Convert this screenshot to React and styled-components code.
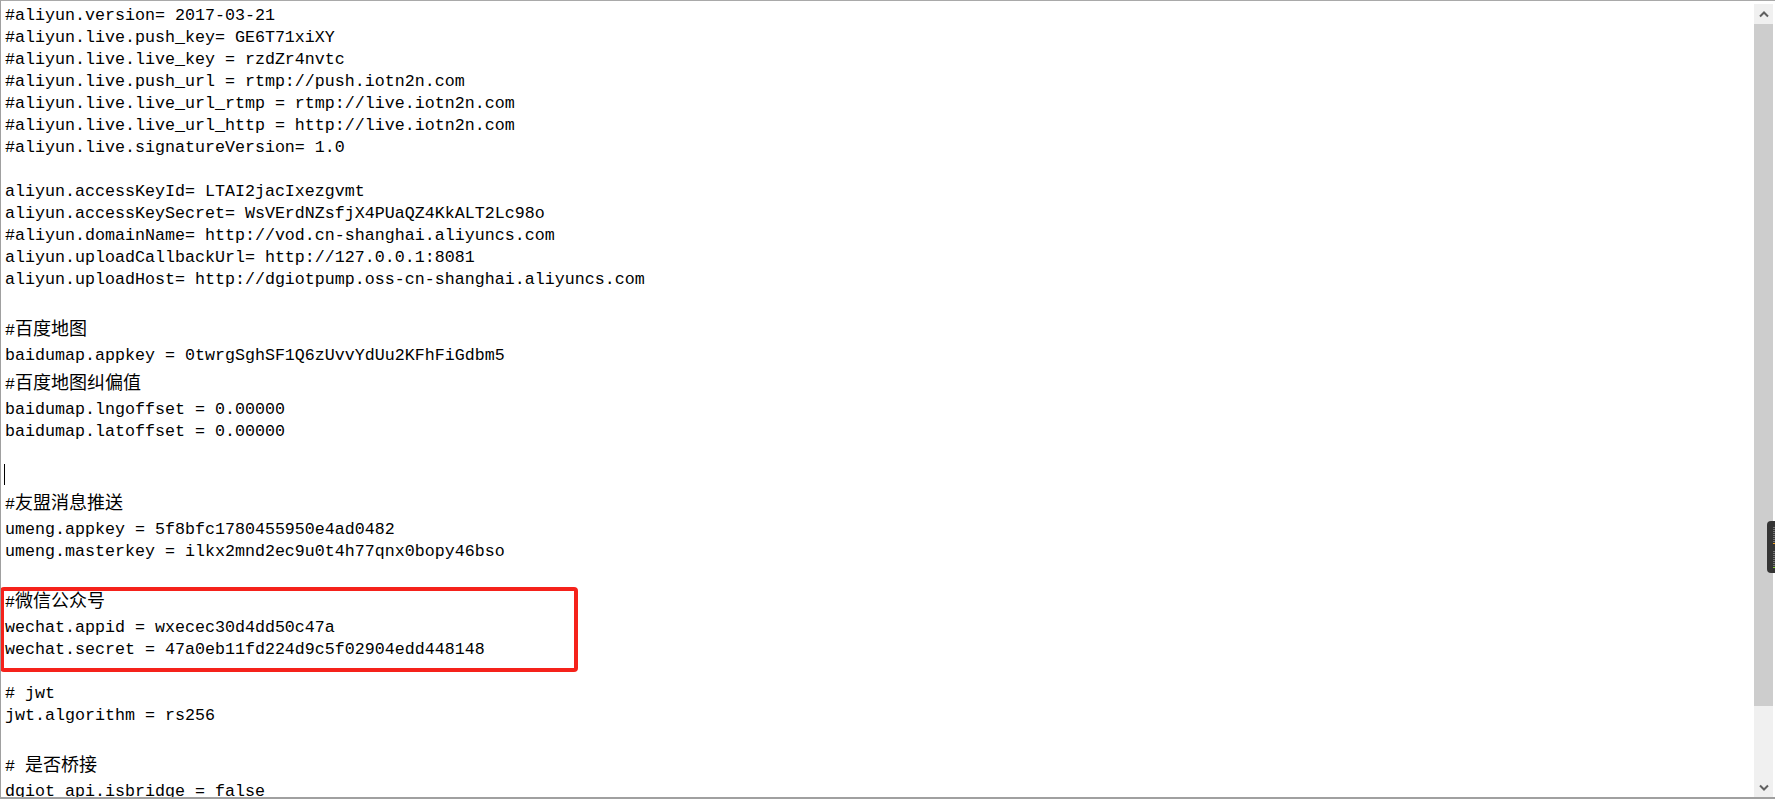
import React from 'react';
import styled, { createGlobalStyle } from 'styled-components';

const lines = [
  { text: '#aliyun.version= 2017-03-21' },
  { text: '#aliyun.live.push_key= GE6T71xiXY' },
  { text: '#aliyun.live.live_key = rzdZr4nvtc' },
  { text: '#aliyun.live.push_url = rtmp://push.iotn2n.com' },
  { text: '#aliyun.live.live_url_rtmp = rtmp://live.iotn2n.com' },
  { text: '#aliyun.live.live_url_http = http://live.iotn2n.com' },
  { text: '#aliyun.live.signatureVersion= 1.0' },
  { text: '' },
  { text: 'aliyun.accessKeyId= LTAI2jacIxezgvmt' },
  { text: 'aliyun.accessKeySecret= WsVErdNZsfjX4PUaQZ4KkALT2Lc98o' },
  { text: '#aliyun.domainName= http://vod.cn-shanghai.aliyuncs.com' },
  { text: 'aliyun.uploadCallbackUrl= http://127.0.0.1:8081' },
  { text: 'aliyun.uploadHost= http://dgiotpump.oss-cn-shanghai.aliyuncs.com' },
  { text: '' },
  { text: '#百度地图' },
  { text: 'baidumap.appkey = 0twrgSghSF1Q6zUvvYdUu2KFhFiGdbm5' },
  { text: '#百度地图纠偏值' },
  { text: 'baidumap.lngoffset = 0.00000' },
  { text: 'baidumap.latoffset = 0.00000' },
  { text: '' },
  { text: '', caret: true },
  { text: '#友盟消息推送' },
  { text: 'umeng.appkey = 5f8bfc1780455950e4ad0482' },
  { text: 'umeng.masterkey = ilkx2mnd2ec9u0t4h77qnx0bopy46bso' },
  { text: '' },
  { text: '#微信公众号' },
  { text: 'wechat.appid = wxecec30d4dd50c47a' },
  { text: 'wechat.secret = 47a0eb11fd224d9c5f02904edd448148' },
  { text: '' },
  { text: '# jwt' },
  { text: 'jwt.algorithm = rs256' },
  { text: '' },
  { text: '# 是否桥接' },
  { text: 'dgiot_api.isbridge = false' },
];

const cjkRe = /[\u4e00-\u9fff]+/g;

// split a line into plain and CJK runs so the wide glyphs get their own font
function renderText(text) {
  const parts = [];
  let last = 0;
  let m;
  cjkRe.lastIndex = 0;
  while ((m = cjkRe.exec(text))) {
    if (m.index > last) parts.push(text.slice(last, m.index));
    parts.push(<Cjk key={m.index}>{m[0]}</Cjk>);
    last = m.index + m[0].length;
  }
  if (last < text.length) parts.push(text.slice(last));
  return parts;
}

const ticks = [
  '#777', '#777', '#777', '#777', '#777', '#777', '#777', '#777',
  '#f0a020', '', '', '',
  '#777', '#777', '#777', '#777', '#777', '#777', '#777', '#777',
  '#8bd23c',
];

const Chevron = ({ down }) => (
  <svg width="10" height="7" viewBox="0 0 10 7">
    <polyline
      points={down ? '1,1.5 5,5.5 9,1.5' : '1,5.5 5,1.5 9,5.5'}
      fill="none"
      stroke="#606060"
      strokeWidth="2"
    />
  </svg>
);

export default function App() {
  return (
    <Window>
      <GlobalStyle />
      <Editor>
        {lines.map((line, i) => {
          const tall = cjkRe.test(line.text);
          cjkRe.lastIndex = 0;
          return (
            <Line key={i} $tall={tall}>
              {line.caret ? <Caret /> : renderText(line.text)}
            </Line>
          );
        })}
      </Editor>

      <Scrollbar>
        <ArrowButton><Chevron /></ArrowButton>
        <Track>
          <Thumb />
        </Track>
        <ArrowButton><Chevron down /></ArrowButton>
      </Scrollbar>

      <Callout />

      <SideHandle>
        {ticks.map((c, i) => (
          <Tick key={i} $color={c} />
        ))}
      </SideHandle>
    </Window>
  );
}

const GlobalStyle = createGlobalStyle`
  html, body {
    margin: 0;
    padding: 0;
    background: #fff;
    overflow: hidden;
  }
`;

const Window = styled.div`
  position: relative;
  display: flex;
  box-sizing: border-box;
  width: 1775px;
  height: 799px;
  padding: 3px 2px 0 0;
  border-top: 1px solid #a9a9a9;
  border-left: 1px solid #a0a0a0;
  border-bottom: 2px solid #a0a0a0;
  background: #fff;
  overflow: hidden;
`;

const Editor = styled.div`
  flex: 1;
  padding-left: 4px;
  font-family: "Liberation Mono", "Noto Sans CJK SC", monospace;
  font-size: 16.67px;
  color: #000;
  white-space: pre;
  overflow: hidden;
`;

const Line = styled.div`
  box-sizing: border-box;
  height: ${p => (p.$tall ? 32 : 22)}px;
  padding-top: ${p => (p.$tall ? 6 : 1)}px;
  line-height: ${p => (p.$tall ? 26 : 21)}px;
`;

const Cjk = styled.span`
  font-family: "Noto Sans CJK SC", sans-serif;
  font-size: 18px;
  line-height: 1;
`;

const Caret = styled.span`
  display: inline-block;
  width: 1px;
  height: 21px;
  margin-top: -1px;
  margin-left: -1px;
  background: #000;
  vertical-align: top;
`;

const Scrollbar = styled.div`
  display: flex;
  flex-direction: column;
  width: 19px;
  background: #f0f0f0;
`;

const ArrowButton = styled.div`
  display: flex;
  align-items: center;
  justify-content: center;
  height: 20px;
  background: #f0f0f0;
`;

const Track = styled.div`
  flex: 1;
  display: flex;
  flex-direction: column;
`;

const Thumb = styled.div`
  height: 682px;
  background: #cdcdcd;
`;

const Callout = styled.div`
  position: absolute;
  left: -1px;
  top: 586px;
  width: 578px;
  height: 85px;
  box-sizing: border-box;
  border: 4px solid #f5221b;
  border-radius: 4px;
  pointer-events: none;
`;

const SideHandle = styled.div`
  position: absolute;
  right: 0;
  top: 520px;
  width: 8px;
  height: 52px;
  box-sizing: border-box;
  padding: 6px 0 0 6px;
  display: flex;
  flex-direction: column;
  gap: 1px;
  background: #353535;
  border-radius: 4px 0 0 4px;
`;

const Tick = styled.div`
  width: 2px;
  height: 1px;
  background: ${p => p.$color || 'transparent'};
`;
